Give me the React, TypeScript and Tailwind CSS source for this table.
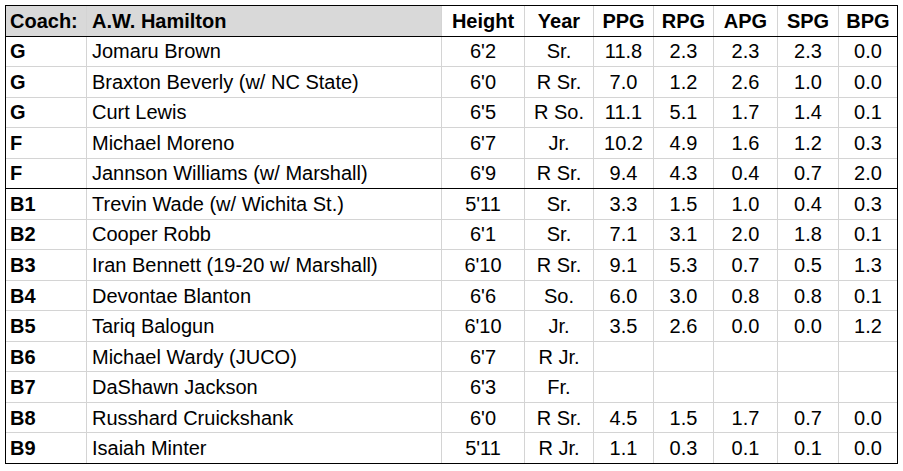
const COLS = [
  'w-[81px] pl-[4px] justify-start',
  'w-[355px] pl-[5px] justify-start',
  'w-[83px] justify-center',
  'w-[69px] justify-center',
  'w-[60px] justify-center',
  'w-[60px] justify-center',
  'w-[64px] justify-center',
  'w-[61px] justify-center',
  'w-[58px] justify-center',
]

type Row = [string, string, string, string, string, string, string, string, string]

const ROWS: Row[] = [
  ['G', 'Jomaru Brown', "6'2", 'Sr.', '11.8', '2.3', '2.3', '2.3', '0.0'],
  ['G', 'Braxton Beverly (w/ NC State)', "6'0", 'R Sr.', '7.0', '1.2', '2.6', '1.0', '0.0'],
  ['G', 'Curt Lewis', "6'5", 'R So.', '11.1', '5.1', '1.7', '1.4', '0.1'],
  ['F', 'Michael Moreno', "6'7", 'Jr.', '10.2', '4.9', '1.6', '1.2', '0.3'],
  ['F', 'Jannson Williams (w/ Marshall)', "6'9", 'R Sr.', '9.4', '4.3', '0.4', '0.7', '2.0'],
  ['B1', 'Trevin Wade (w/ Wichita St.)', "5'11", 'Sr.', '3.3', '1.5', '1.0', '0.4', '0.3'],
  ['B2', 'Cooper Robb', "6'1", 'Sr.', '7.1', '3.1', '2.0', '1.8', '0.1'],
  ['B3', 'Iran Bennett (19-20 w/ Marshall)', "6'10", 'R Sr.', '9.1', '5.3', '0.7', '0.5', '1.3'],
  ['B4', 'Devontae Blanton', "6'6", 'So.', '6.0', '3.0', '0.8', '0.8', '0.1'],
  ['B5', 'Tariq Balogun', "6'10", 'Jr.', '3.5', '2.6', '0.0', '0.0', '1.2'],
  ['B6', 'Michael Wardy (JUCO)', "6'7", 'R Jr.', '', '', '', '', ''],
  ['B7', 'DaShawn Jackson', "6'3", 'Fr.', '', '', '', '', ''],
  ['B8', 'Russhard Cruickshank', "6'0", 'R Sr.', '4.5', '1.5', '1.7', '0.7', '0.0'],
  ['B9', 'Isaiah Minter', "5'11", 'R Jr.', '1.1', '0.3', '0.1', '0.1', '0.0'],
]

const HEAD = ['Height', 'Year', 'PPG', 'RPG', 'APG', 'SPG', 'BPG']

function Cell({ i, children, className = '' }: { i: number; children?: React.ReactNode; className?: string }) {
  return (
    <div
      className={`${COLS[i]} flex h-full shrink-0 items-center ${i < 8 ? 'border-r border-[#d4d4d4]' : ''} ${className}`}
    >
      {children}
    </div>
  )
}

export default function App() {
  return (
    <div className="h-[471px] w-[903px] bg-white pl-[5px] pt-[5px] font-['Liberation_Sans',Arial,sans-serif] text-[20px] leading-none text-black">
      <div className="flex h-[459px] w-[893px] flex-col border border-black">
        {/* header: only the first two cells are shaded */}
        <div className="flex flex-1 border-b border-black font-bold">
          <Cell i={0} className="bg-[#d9d9d9]">Coach:</Cell>
          <Cell i={1} className="bg-[#d9d9d9]">A.W. Hamilton</Cell>
          {HEAD.map((h, k) => (
            <Cell key={h} i={k + 2}>
              {h}
            </Cell>
          ))}
        </div>
        {ROWS.map((r, n) => (
          <div
            key={r[1]}
            className={`flex flex-1 ${n === 13 ? '' : n === 4 ? 'border-b border-black' : 'border-b border-[#d4d4d4]'}`}
          >
            {r.map((v, i) => (
              <Cell key={i} i={i} className={i === 0 ? 'font-bold' : ''}>
                {v}
              </Cell>
            ))}
          </div>
        ))}
      </div>
    </div>
  )
}
